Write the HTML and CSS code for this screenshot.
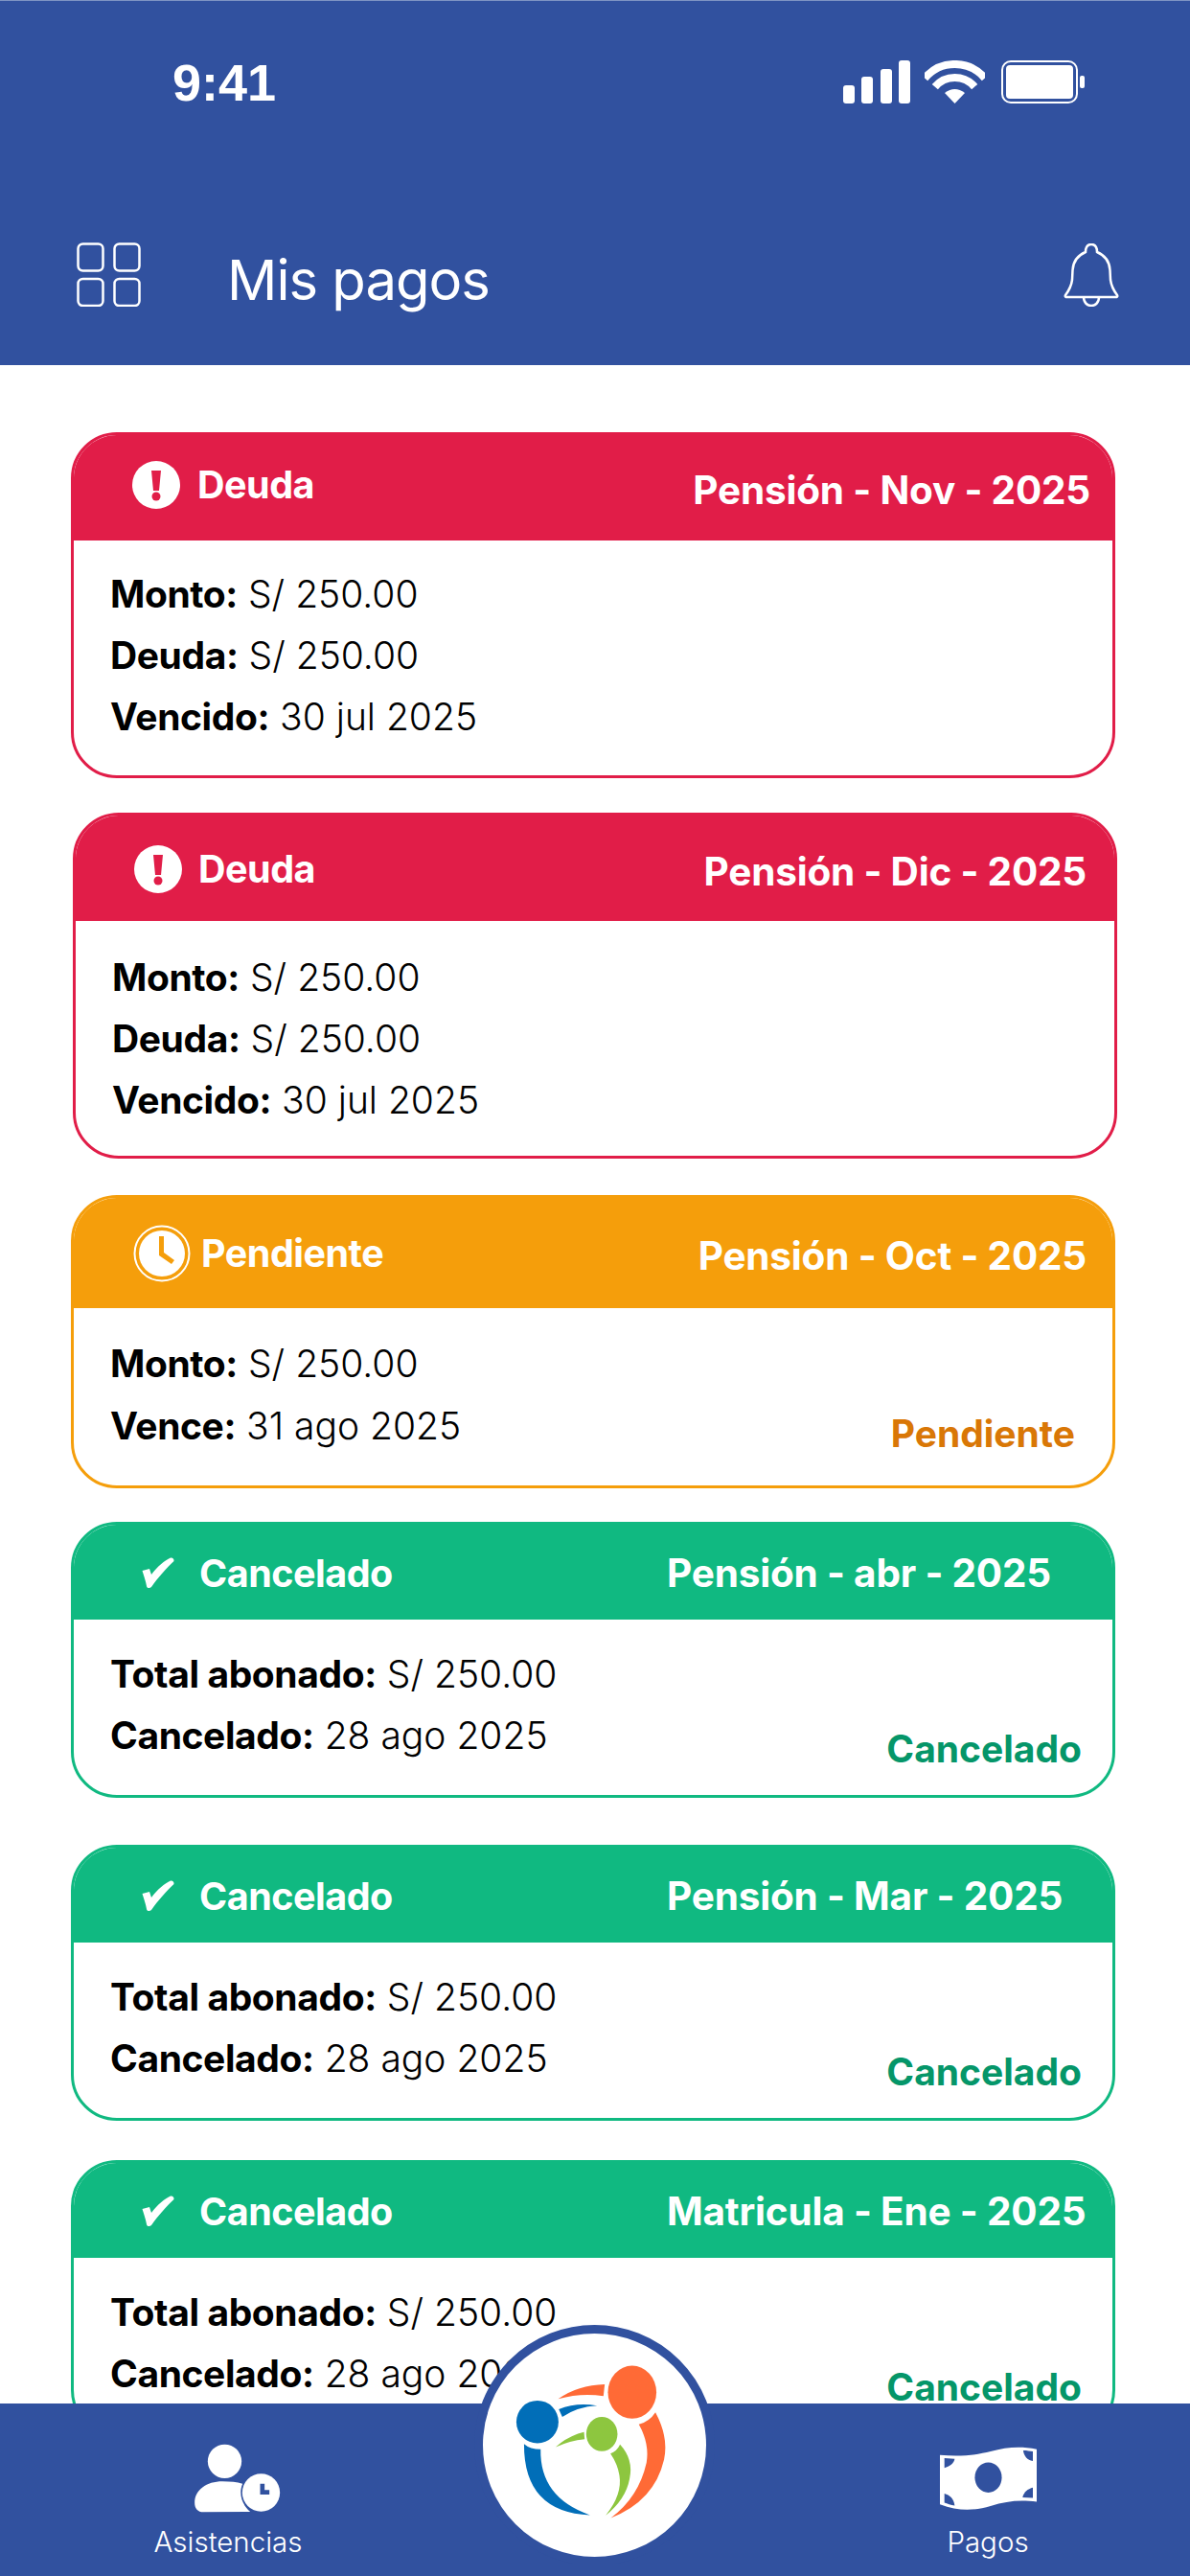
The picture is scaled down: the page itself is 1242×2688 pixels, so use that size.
FILE: index.html
```html
<!DOCTYPE html>
<html lang="es">
<head>
  <meta charset="UTF-8" />
  <meta name="viewport" content="width=device-width, initial-scale=1" />
  <title>Mis pagos</title>
  <link rel="stylesheet" href="styles.css">
</head>
<body>
  <div class="app">
    <header class="topbar">
      <div class="status-bar">
        <span class="clock">9:41</span>
        <div class="status-icons">
          <svg class="ic-signal" width="70" height="45" viewBox="0 0 70 45" fill="#fff">
            <rect x="0" y="26" width="12" height="19" rx="3"/>
            <rect x="19" y="17" width="12" height="28" rx="3"/>
            <rect x="39" y="9" width="12" height="36" rx="3"/>
            <rect x="58" y="0" width="12" height="45" rx="3"/>
          </svg>
          <svg class="ic-wifi" width="63" height="45" viewBox="0 0 63 45" fill="none" stroke="#fff" stroke-width="8">
            <path d="M0.1 18.6 A41 41 0 0 1 62.9 18.6"/>
            <path d="M10.8 27.6 A27 27 0 0 1 52.2 27.6"/>
            <path d="M31.5 45 L21 34 Q31.5 26 42 34 Z" fill="#fff" stroke="none"/>
          </svg>
          <svg class="ic-battery" width="87" height="45" viewBox="0 0 87 45" fill="#fff">
            <rect x="1" y="1" width="78" height="43" rx="9" fill="none" stroke="#fff" stroke-width="2"/>
            <rect x="5" y="5" width="70" height="35" rx="4"/>
            <rect x="82" y="16" width="5" height="13" rx="2"/>
          </svg>
        </div>
      </div>
      <div class="app-bar">
        <svg class="ic-grid" width="67" height="67" viewBox="0 0 67 67" fill="none" stroke="#fff" stroke-width="2.5">
          <rect x="1.5" y="1.5" width="26" height="28" rx="5"/>
          <rect x="39.5" y="1.5" width="26" height="28" rx="5"/>
          <rect x="1.5" y="38" width="26" height="28" rx="5"/>
          <rect x="39.5" y="38" width="26" height="28" rx="5"/>
        </svg>
        <h1 class="page-title">Mis pagos</h1>
        <svg class="ic-bell" width="58" height="66" viewBox="0 0 58 66" fill="none" stroke="#fff" stroke-width="2.5">
          <path d="M2 54 Q8 46 9 38 L9.5 28 C10 18 16 12 23 9 C23 4 25 1 29 1 C33 1 35 4 35 9 C42 12 48 18 48.5 28 L49 38 Q50 46 56 54 Q57 56 54 56 L4 56 Q1 56 2 54 Z"/>
          <path d="M21 56 C21 68 37 68 37 56"/>
        </svg>
      </div>
    </header>

    <main class="payments">
      <section class="card card-debt">
        <div class="card-head">
          <div class="card-state">
            <svg class="state-icon" width="50" height="50" viewBox="0 0 50 50">
              <ellipse cx="25" cy="25" rx="25" ry="25" fill="#fff"/>
              <path d="M20 10 H30 L28 31 H22 Z" fill="#e11d48"/>
              <circle cx="25" cy="37" r="4.5" fill="#e11d48"/>
            </svg>
            <span>Deuda</span>
          </div>
          <div class="card-period">Pensión - Nov - 2025</div>
        </div>
        <div class="card-body">
          <div class="card-rows">
            <p><b>Monto:</b> S/ 250.00</p>
            <p><b>Deuda:</b> S/ 250.00</p>
            <p><b>Vencido:</b> 30 jul 2025</p>
          </div>
        </div>
      </section>

      <section class="card card-debt card-shifted">
        <div class="card-head">
          <div class="card-state">
            <svg class="state-icon" width="50" height="50" viewBox="0 0 50 50">
              <ellipse cx="25" cy="25" rx="25" ry="25" fill="#fff"/>
              <path d="M20 10 H30 L28 31 H22 Z" fill="#e11d48"/>
              <circle cx="25" cy="37" r="4.5" fill="#e11d48"/>
            </svg>
            <span>Deuda</span>
          </div>
          <div class="card-period">Pensión - Dic - 2025</div>
        </div>
        <div class="card-body">
          <div class="card-rows">
            <p><b>Monto:</b> S/ 250.00</p>
            <p><b>Deuda:</b> S/ 250.00</p>
            <p><b>Vencido:</b> 30 jul 2025</p>
          </div>
        </div>
      </section>

      <section class="card card-pending">
        <div class="card-head">
          <div class="card-state">
            <svg class="state-icon" width="60" height="60" viewBox="0 0 60 60">
              <circle cx="30" cy="30" r="28.5" fill="none" stroke="#fff" stroke-width="2"/>
              <circle cx="30" cy="30" r="24" fill="#fff"/>
              <path d="M27 12 H32 V29 L43 37 L40 41 L27 32 Z" fill="#f59e0b"/>
            </svg>
            <span>Pendiente</span>
          </div>
          <div class="card-period">Pensión - Oct - 2025</div>
        </div>
        <div class="card-body">
          <div class="card-rows">
            <p><b>Monto:</b> S/ 250.00</p>
            <p><b>Vence:</b> 31 ago 2025</p>
          </div>
          <span class="card-status">Pendiente</span>
        </div>
      </section>

      <section class="card card-paid">
        <div class="card-head">
          <div class="card-state">
            <svg class="state-icon" width="34" height="33" viewBox="0 0 34 33" fill="#fff">
              <path d="M0.5 14 L8 12 L10 18 C16 10 24 3 30 0.5 C32 0 34 2 33.5 4 C26 11 17 21 10 31 C8 33 5 32 5 30 C4 24 2 19 0.5 14 Z"/>
            </svg>
            <span>Cancelado</span>
          </div>
          <div class="card-period">Pensión - abr - 2025</div>
        </div>
        <div class="card-body">
          <div class="card-rows">
            <p><b>Total abonado:</b> S/ 250.00</p>
            <p><b>Cancelado:</b> 28 ago 2025</p>
          </div>
          <span class="card-status">Cancelado</span>
        </div>
      </section>

      <section class="card card-paid">
        <div class="card-head">
          <div class="card-state">
            <svg class="state-icon" width="34" height="33" viewBox="0 0 34 33" fill="#fff">
              <path d="M0.5 14 L8 12 L10 18 C16 10 24 3 30 0.5 C32 0 34 2 33.5 4 C26 11 17 21 10 31 C8 33 5 32 5 30 C4 24 2 19 0.5 14 Z"/>
            </svg>
            <span>Cancelado</span>
          </div>
          <div class="card-period">Pensión - Mar - 2025</div>
        </div>
        <div class="card-body">
          <div class="card-rows">
            <p><b>Total abonado:</b> S/ 250.00</p>
            <p><b>Cancelado:</b> 28 ago 2025</p>
          </div>
          <span class="card-status">Cancelado</span>
        </div>
      </section>

      <section class="card card-paid">
        <div class="card-head">
          <div class="card-state">
            <svg class="state-icon" width="34" height="33" viewBox="0 0 34 33" fill="#fff">
              <path d="M0.5 14 L8 12 L10 18 C16 10 24 3 30 0.5 C32 0 34 2 33.5 4 C26 11 17 21 10 31 C8 33 5 32 5 30 C4 24 2 19 0.5 14 Z"/>
            </svg>
            <span>Cancelado</span>
          </div>
          <div class="card-period">Matricula - Ene - 2025</div>
        </div>
        <div class="card-body">
          <div class="card-rows">
            <p><b>Total abonado:</b> S/ 250.00</p>
            <p><b>Cancelado:</b> 28 ago 2025</p>
          </div>
          <span class="card-status">Cancelado</span>
        </div>
      </section>
    </main>

    <nav class="tabbar">
      <a class="tab" href="#">
        <svg class="tab-icon tab-icon-people" width="91" height="72" viewBox="305 210 272 216">
          <circle cx="402" cy="265" r="53" fill="#fff"/>
          <path d="M308 395 C308 355 345 328 395 328 C420 328 440 330 458 335 C445 365 455 400 482 423 L335 424 C318 424 308 412 308 395 Z" fill="#fff"/>
          <circle cx="516" cy="363" r="59" fill="#fff"/>
          <path d="M513 335 H527 V355 H542 V369 H513 Z" fill="#31519f"/>
        </svg>
        <span>Asistencias</span>
      </a>
      <a class="tab" href="#">
        <svg class="tab-icon" width="101" height="67" viewBox="182 228 302 201">
          <path d="M182 256 C250 262 300 255 340 245 C390 232 430 228 484 238 L484 402 C430 395 390 400 340 415 C290 430 240 432 182 410 Z" fill="#fff"/>
          <ellipse cx="333" cy="326" rx="42" ry="47" fill="#31519f"/>
          <path d="M196 266 L228 268 C226 282 212 292 196 296 Z" fill="#31519f"/>
          <path d="M196 376 C212 380 226 392 228 414 C216 412 205 408 196 405 Z" fill="#31519f"/>
          <path d="M442 242 C455 242 462 244 472 245 L472 275 C455 272 444 260 442 242 Z" fill="#31519f"/>
          <path d="M472 358 L472 390 L440 388 C444 372 456 362 472 358 Z" fill="#31519f"/>
        </svg>
        <span>Pagos</span>
      </a>
    </nav>

    <div class="logo-badge">
      <svg width="233" height="233" viewBox="252 165 700 700">
        <ellipse cx="720" cy="349" rx="76" ry="83" fill="#ff6a36"/>
        <path d="M488 370 Q550 326 634 324 L630 361 Q560 350 488 370 Z" fill="#ff6a36"/>
        <path d="M793 412 Q835 490 820 560 Q790 690 653 743 Q740 680 765 570 Q775 510 741 450 Q775 440 793 412 Z" fill="#ff6a36"/>
        <ellipse cx="423" cy="442" rx="66" ry="67" fill="#016eb8"/>
        <path d="M490 402 Q545 380 610 391 Q550 394 501 426 Z" fill="#016eb8"/>
        <path d="M381 511 Q400 528 433 528 Q430 680 588 734 Q380 725 381 511 Z" fill="#016eb8"/>
        <ellipse cx="625" cy="480" rx="49" ry="54" fill="#8dc63f"/>
        <path d="M480 521 Q520 485 569 474 L571 496 Q525 500 480 521 Z" fill="#8dc63f"/>
        <path d="M682 513 Q725 560 712 620 Q700 685 637 735 Q690 670 680 610 Q675 575 652 541 Q672 535 682 513 Z" fill="#8dc63f"/>
      </svg>
    </div>
  </div>
</body>
</html>
```

FILE: styles.css
```css
* {
  margin: 0;
  padding: 0;
  box-sizing: border-box;
}

body, html {
  height: 100%;
  font-family: Inter, "Noto Sans", sans-serif;
  background: #fff;
}

.app {
  position: relative;
  display: flex;
  flex-direction: column;
  width: 1242px;
  height: 2688px;
  overflow: hidden;
}

/* top */
.topbar {
  flex: none;
  height: 381px;
  background-color: #31519f;
  border-top: 1px solid #7f94c4;
  color: #fff;
}

.status-bar {
  display: flex;
  justify-content: space-between;
  align-items: center;
  height: 45px;
  margin-top: 62px;
  padding: 0 110px 0 180px;
}

.clock {
  font-family: "Liberation Sans", Arial, sans-serif;
  font-size: 54px;
  font-weight: bold;
}

.status-icons {
  display: flex;
  align-items: flex-end;
  gap: 15px;
}

.status-icons .ic-battery {
  margin-left: 2px;
}

.app-bar {
  display: flex;
  align-items: center;
  height: 67px;
  margin-top: 145px;
  padding: 0 74px 0 80px;
}

.page-title {
  flex: 1;
  margin: 10px 0 0 90px;
  font-size: 58px;
  font-weight: 400;
  letter-spacing: -1px;
}

/* list */
.payments {
  flex: 1;
  min-height: 0;
  overflow: hidden;
  display: flex;
  flex-direction: column;
  padding: 70px 78px 0 74px;
}

.card {
  flex: none;
  border: 3px solid;
  border-radius: 48px;
  overflow: hidden;
  background: #fff;
  --tone: #000;
  border-color: var(--tone);
}

.card-shifted { margin-left: 2px; margin-right: -2px; }

.card:nth-child(2) { margin-top: 36px; }
.card:nth-child(3) { margin-top: 38px; }
.card:nth-child(4) { margin-top: 35px; }
.card:nth-child(5) { margin-top: 49px; }
.card:nth-child(6) { margin-top: 41px; }

.card-debt { --tone: #e11d48; }
.card-pending { --tone: #f59e0b; }
.card-paid { --tone: #10b981; }

.card-head {
  display: flex;
  justify-content: space-between;
  align-items: center;
  height: 110px;
  padding: 0 23px 0 61px;
  background-color: var(--tone);
  color: #fff;
  font-weight: 700;
}

.card-state {
  display: flex;
  align-items: center;
  gap: 18px;
  padding-bottom: 6px;
  font-size: 39.5px;
  letter-spacing: -0.5px;
}

.card-period {
  padding-top: 4px;
  font-size: 40.5px;
  letter-spacing: -0.2px;
}

.card-shifted .card-head { padding-right: 29px; }
.card-shifted .card-state { gap: 17px; padding-bottom: 0; padding-top: 1px; }
.card-shifted .card-period { padding-top: 6px; }
.card-shifted .card-body { padding-top: 27px; padding-bottom: 26px; }

.card-pending .card-head {
  height: 115px;
  padding-left: 62px;
  padding-right: 27px;
}

.card-pending .card-state { gap: 11px; padding-bottom: 0; }
.card-pending .card-period { padding-top: 6px; }

.card-paid .card-head {
  height: 99px;
}

.card-paid .card-state { gap: 26px; padding-bottom: 0; padding-top: 2px; }
.card-paid .state-icon { margin-left: 10px; }

.card-paid .card-period {
  width: 442px;
  padding-top: 2px;
}

.state-icon {
  display: block;
}

.card-body {
  display: flex;
  justify-content: space-between;
  align-items: flex-end;
  padding: 24px 39px 29px 38px;
}

.card-rows p {
  font-size: 39px;
  font-weight: 300;
  line-height: 64px;
  color: #000;
}

.card-rows b {
  font-weight: 700;
  letter-spacing: -0.4px;
}

.card-pending .card-body { padding-top: 26px; padding-bottom: 30px; }
.card-pending .card-rows p { line-height: 64.5px; }
.card-paid .card-body { padding: 25px 32px 30px 38px; }

.card-status {
  font-size: 39px;
  font-weight: 700;
  line-height: 40px;
}

.card-pending .card-status { color: #d97706; margin-bottom: 4px; }
.card-paid .card-status { color: #059669; margin-bottom: -2px; }

/* bottom */
.tabbar {
  flex: none;
  display: flex;
  justify-content: space-between;
  height: 180px;
  padding: 42px 111px 0 138px;
  background-color: #31519f;
}

.tab {
  display: flex;
  flex-direction: column;
  align-items: center;
  width: 200px;
  color: #fff;
  font-size: 29.5px;
  font-weight: 300;
  text-decoration: none;
}

.tab-icon {
  display: block;
  height: 72px;
  margin-bottom: 12px;
}

.tab-icon-people { margin-left: 18px; }

.logo-badge {
  position: absolute;
  left: 495px;
  top: 2426px;
  display: flex;
  justify-content: center;
  align-items: center;
  width: 251px;
  height: 251px;
  background: #fff;
  border: 9px solid #31519f;
  border-radius: 50%;
}

.logo-badge svg {
  display: block;
  flex: none;
}
```
